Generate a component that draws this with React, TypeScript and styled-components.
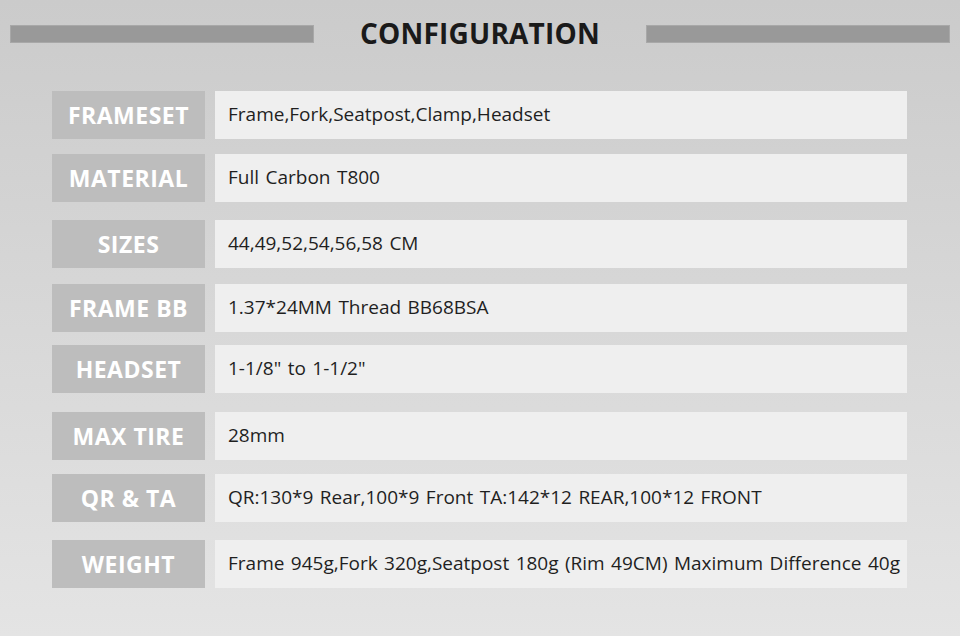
import React from 'react';
import styled, { createGlobalStyle } from 'styled-components';

const GlobalStyle = createGlobalStyle`
  html, body {
    margin: 0;
    padding: 0;
  }
  body {
    width: 960px;
    height: 636px;
    overflow: hidden;
    font-family: "Open Sans", "Noto Sans", sans-serif;
  }
`;

const rows = [
  { label: 'FRAMESET', value: 'Frame,Fork,Seatpost,Clamp,Headset', gap: 0 },
  { label: 'MATERIAL', value: 'Full Carbon T800', gap: 15 },
  { label: 'SIZES', value: '44,49,52,54,56,58 CM', gap: 18 },
  { label: 'FRAME BB', value: '1.37*24MM Thread BB68BSA', gap: 16 },
  { label: 'HEADSET', value: '1-1/8" to 1-1/2"', gap: 13 },
  { label: 'MAX TIRE', value: '28mm', gap: 19 },
  { label: 'QR & TA', value: 'QR:130*9 Rear,100*9 Front TA:142*12 REAR,100*12 FRONT', gap: 14 },
  {
    label: 'WEIGHT',
    value: 'Frame 945g,Fork 320g,Seatpost 180g (Rim 49CM) Maximum Difference 40g',
    gap: 18,
  },
];

const Page = styled.div`
  width: 960px;
  height: 636px;
  box-sizing: border-box;
  padding-top: 25px;
  background: linear-gradient(to bottom, #cbcbcb 0%, #d5d5d5 40%, #e4e4e4 100%);
`;

const Header = styled.header`
  display: flex;
  align-items: center;
  justify-content: space-between;
  padding: 0 10px;
  height: 18px;
`;

const Bar = styled.div`
  width: 304px;
  height: 18px;
  box-sizing: border-box;
  background: #999999;
  border: 1px solid #a8a8a8;
`;

const Title = styled.h1`
  margin: 0;
  font-size: 28px;
  font-weight: 700;
  color: #1a1a1a;
  letter-spacing: 0.2px;
  line-height: 18px;
  margin-top: -3px;
`;

const Table = styled.div`
  display: flex;
  flex-direction: column;
  padding: 48px 0 0 52px;
`;

const Row = styled.div<{ $gap: number }>`
  display: flex;
  gap: 10px;
  height: 48px;
  margin-top: ${({ $gap }) => $gap}px;
`;

const Label = styled.div`
  width: 153px;
  display: flex;
  align-items: center;
  justify-content: center;
  background: #bdbdbd;
  color: #ffffff;
  font-size: 23px;
  font-weight: 700;
  letter-spacing: 0.5px;
`;

const Value = styled.div`
  width: 692px;
  display: flex;
  align-items: center;
  box-sizing: border-box;
  padding: 0 0 2px 13px;
  background: #efefef;
  color: #1f1f1f;
  font-size: 19px;
  word-spacing: 1.5px;
  white-space: nowrap;
`;

export default function App() {
  return (
    <>
      <GlobalStyle />
      <Page>
        <Header>
          <Bar />
          <Title>CONFIGURATION</Title>
          <Bar />
        </Header>
        <Table>
          {rows.map((r) => (
            <Row key={r.label} $gap={r.gap}>
              <Label>{r.label}</Label>
              <Value>{r.value}</Value>
            </Row>
          ))}
        </Table>
      </Page>
    </>
  );
}
